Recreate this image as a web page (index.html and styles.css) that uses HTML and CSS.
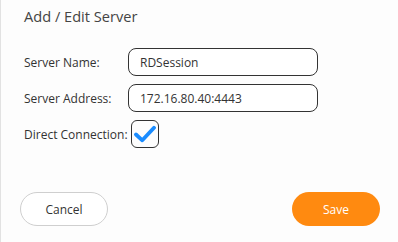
FILE: index.html
```html
<!DOCTYPE html>
<html lang="en">
<head>
    <meta charset="UTF-8">
    <meta name="viewport" content="width=device-width, initial-scale=1.0">
    <title>Add / Edit Server</title>
    <link rel="stylesheet" href="styles.css">
</head>
<body>
<div class="dialog">
    <h2 class="title">Add / Edit Server</h2>

    <div class="form">
        <div class="form-row">
            <label for="server-name">Server Name:</label>
            <input type="text" id="server-name" value="RDSession">
        </div>
        <div class="form-row">
            <label for="server-address">Server Address:</label>
            <input type="text" id="server-address" value="172.16.80.40:4443">
        </div>
        <div class="form-row check-row">
            <label for="direct">Direct Connection:</label>
            <span class="checkbox" id="direct">
                <svg width="22" height="18" viewBox="0 0 22 18">
                    <path d="M2 9.5 L8.3 15.3 L20 2.8" fill="none" stroke="#1a8cff" stroke-width="3.8" stroke-linecap="round" stroke-linejoin="round"/>
                </svg>
            </span>
        </div>
    </div>

    <div class="actions">
        <button class="btn cancel-btn">Cancel</button>
        <button class="btn save-btn">Save</button>
    </div>
</div>
</body>
</html>
```

FILE: styles.css
```css
body {
    margin: 0;
    padding: 0;
    font-family: "Open Sans", "Noto Sans", sans-serif;
    background: #fdfdfd;
}
.dialog {
    width: 397px;
    height: 242px;
    box-sizing: border-box;
    border-left: 1px solid #e2e2e2;
    padding: 6px 0 0 23px;
    background: #fdfdfd;
}
.title {
    margin: 0;
    font-size: 14.6px;
    font-weight: normal;
    color: #444;
    line-height: 20px;
}
.form {
    margin-top: 22px;
    display: flex;
    flex-direction: column;
    gap: 8px;
}
.form-row {
    display: flex;
    align-items: center;
}
.form-row label {
    width: 104px;
    font-size: 12px;
    color: #333;
}
.form-row input {
    width: 190px;
    height: 28px;
    box-sizing: border-box;
    border: 1px solid #333;
    border-radius: 8px;
    padding: 0 11px;
    font-family: inherit;
    font-size: 12px;
    color: #333;
    background: #fff;
}
.check-row label {
    width: auto;
    margin-right: 3px;
}
.checkbox {
    width: 28px;
    height: 28px;
    box-sizing: border-box;
    border: 1px solid #333;
    border-radius: 6px;
    display: flex;
    align-items: center;
    justify-content: center;
}
.actions {
    margin-top: 44px;
    display: flex;
    justify-content: space-between;
    padding: 0 17px 0 0;
    margin-left: -4px;
}
.btn {
    width: 88px;
    height: 34px;
    border-radius: 17px;
    font-family: inherit;
    font-size: 12px;
    cursor: pointer;
}
.cancel-btn {
    background: #fff;
    border: 1px solid #cfcfcf;
    color: #333;
}
.save-btn {
    background: #ff8a10;
    border: none;
    color: #fff;
}
```
